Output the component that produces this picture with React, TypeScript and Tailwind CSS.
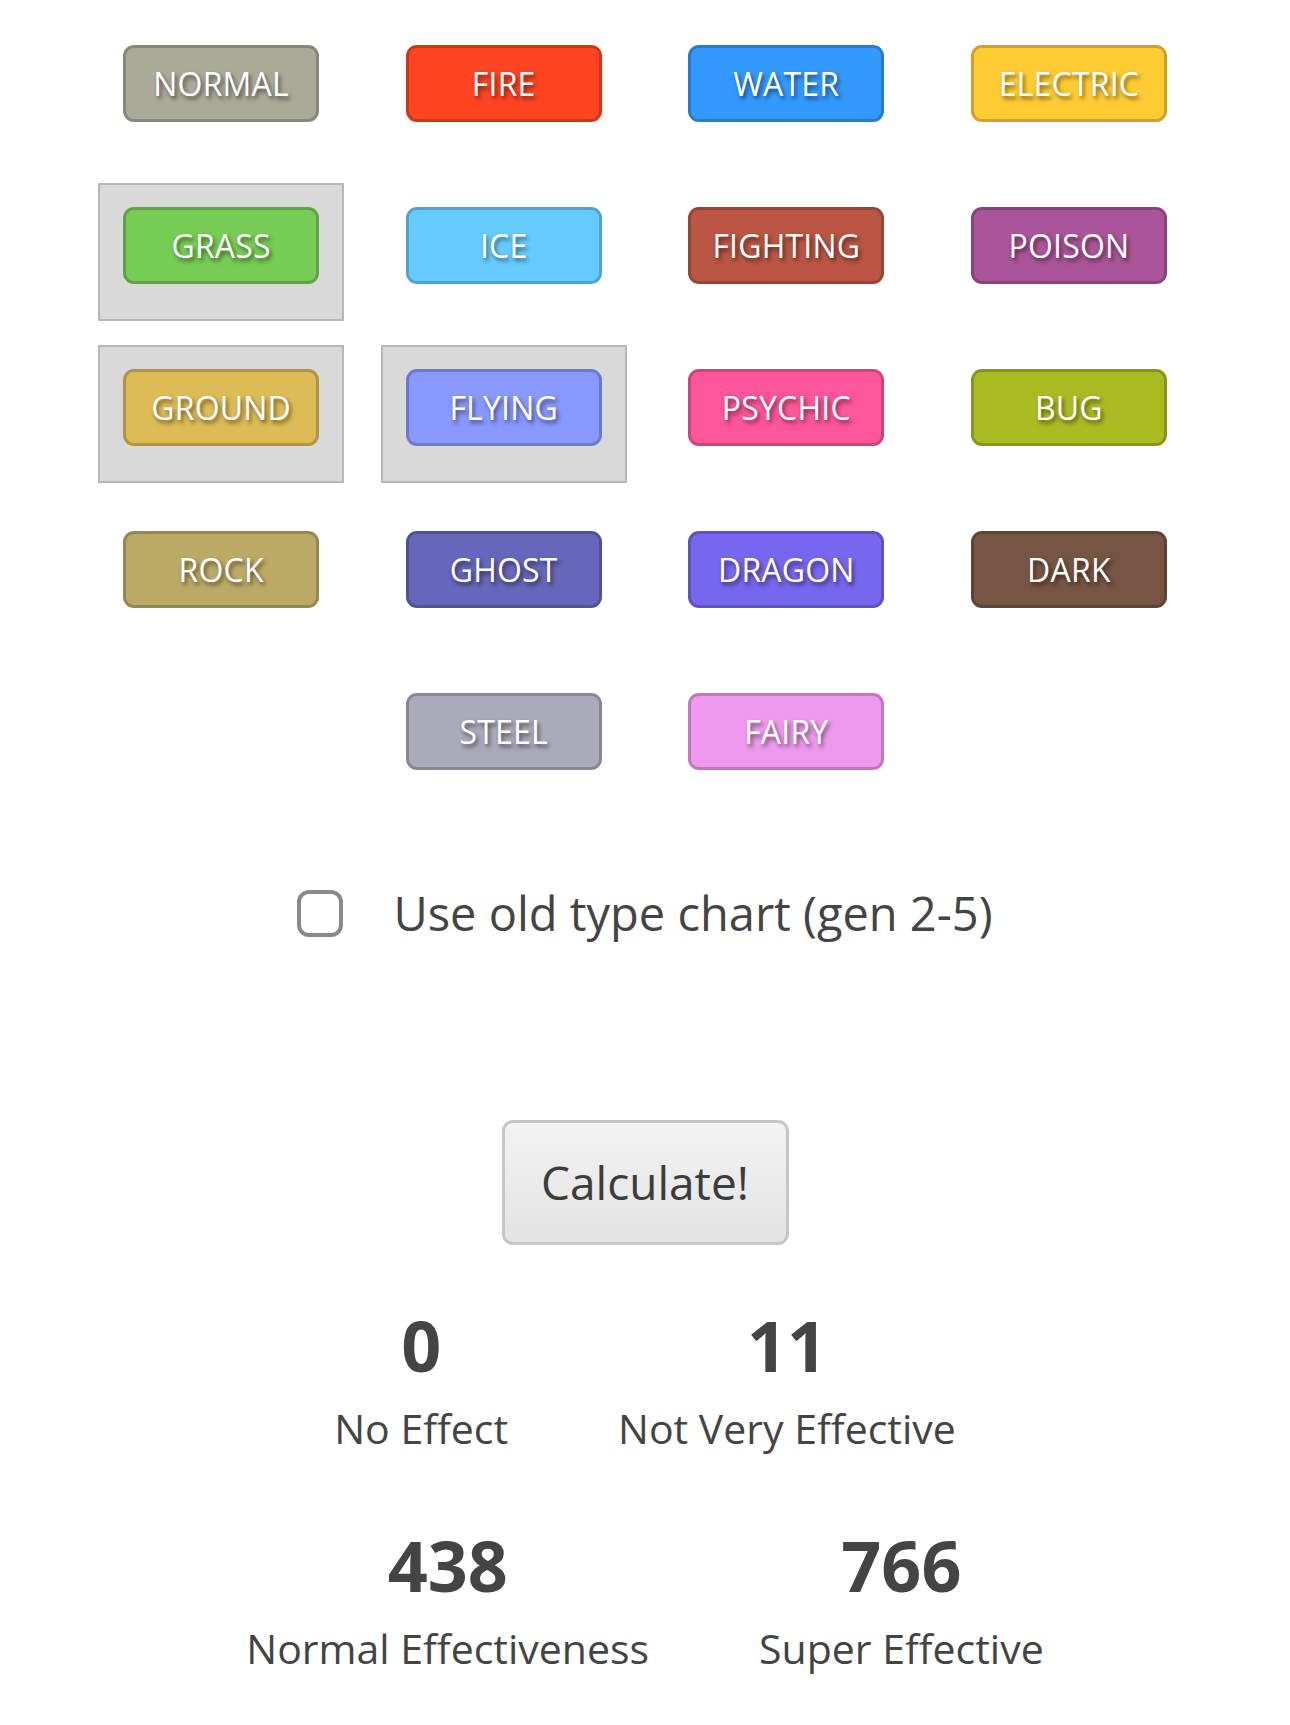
import React from "react";

type PokeType = { name: string; bg: string };

const TYPES: PokeType[] = [
  { name: "NORMAL", bg: "bg-[#aaaa99]" },
  { name: "FIRE", bg: "bg-[#ff4422]" },
  { name: "WATER", bg: "bg-[#3399ff]" },
  { name: "ELECTRIC", bg: "bg-[#ffcc33]" },
  { name: "GRASS", bg: "bg-[#77cc55]" },
  { name: "ICE", bg: "bg-[#66ccff]" },
  { name: "FIGHTING", bg: "bg-[#bb5544]" },
  { name: "POISON", bg: "bg-[#aa5599]" },
  { name: "GROUND", bg: "bg-[#ddbb55]" },
  { name: "FLYING", bg: "bg-[#8899ff]" },
  { name: "PSYCHIC", bg: "bg-[#ff5599]" },
  { name: "BUG", bg: "bg-[#aabb22]" },
  { name: "ROCK", bg: "bg-[#bbaa66]" },
  { name: "GHOST", bg: "bg-[#6666bb]" },
  { name: "DRAGON", bg: "bg-[#7766ee]" },
  { name: "DARK", bg: "bg-[#775544]" },
  { name: "STEEL", bg: "bg-[#aaaabb]" },
  { name: "FAIRY", bg: "bg-[#ee99ee]" },
];

const STATS = [
  { value: 0, label: "No Effect" },
  { value: 11, label: "Not Very Effective" },
  { value: 438, label: "Normal Effectiveness" },
  { value: 766, label: "Super Effective" },
];

const TypeCell = ({ type, selected, onToggle }: { type: PokeType; selected: boolean; onToggle: () => void }) => (
  <div
    className={`w-[246px] h-[138px] pt-[22px] flex justify-center border-2 ${
      selected ? "bg-[#d9d9d9] border-[#b8b8b8]" : "border-transparent"
    }`}
  >
    <button
      onClick={onToggle}
      className={`${type.bg} w-[196px] h-[77px] rounded-[11px] border-[3px] border-black/20 text-white text-[32px] leading-none tracking-[0.2px] [text-shadow:2px_3px_4px_rgba(0,0,0,0.55)]`}
    >
      {type.name}
    </button>
  </div>
);

export default function App() {
  const [selected, setSelected] = React.useState<string[]>(["GRASS", "GROUND", "FLYING"]);
  const [oldChart, setOldChart] = React.useState(false);

  const toggle = (name: string) =>
    setSelected((prev) => (prev.includes(name) ? prev.filter((n) => n !== name) : [...prev, name]));

  return (
    <div className="min-h-screen bg-white text-[#444] font-['Open_Sans',sans-serif]">
      <div className="w-[1094px] mx-auto pt-[21px] flex flex-wrap justify-center gap-x-[36.6px] gap-y-[24px]">
        {TYPES.map((t) => (
          <TypeCell key={t.name} type={t} selected={selected.includes(t.name)} onToggle={() => toggle(t.name)} />
        ))}
      </div>

      <label className="mt-[76px] flex items-center justify-center gap-[50px] cursor-pointer">
        <input type="checkbox" className="sr-only" checked={oldChart} onChange={(e) => setOldChart(e.target.checked)} />
        <span className="w-[46px] h-[47px] rounded-[12px] border-4 border-[#8a8a8a] bg-white" />
        <span className="text-[47px] leading-[60px] text-[#444]">Use old type chart (gen 2-5)</span>
      </label>

      <div className="mt-[177px] flex justify-center">
        <button className="w-[287px] h-[125px] rounded-[11px] border-[3px] border-[#c6c6c6] bg-linear-to-b from-[#f3f3f3] to-[#e3e3e3] text-[46px] text-[#3c3c3c]">
          Calculate!
        </button>
      </div>

      <div className="w-[1000px] mx-auto mt-[60px] flex flex-wrap justify-center gap-y-[67px]">
        {STATS.map((s, i) => (
          <div key={i} className="px-[55px] text-center">
            <div className="text-[70px] leading-[80px] font-bold text-[#444]">{s.value}</div>
            <div className="text-[41px] leading-[60px] mt-[13px] text-[#444]">{s.label}</div>
          </div>
        ))}
      </div>
    </div>
  );
}
